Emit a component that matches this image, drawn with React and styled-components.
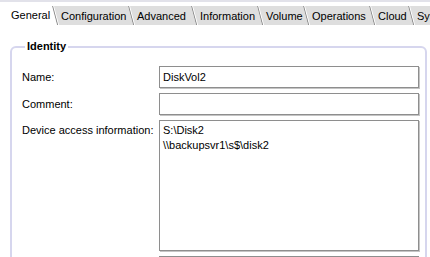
import React from 'react'
import styled, { createGlobalStyle } from 'styled-components'

const Global = createGlobalStyle`
  html, body {
    margin: 0;
    padding: 0;
    background: #fff;
  }
  body {
    font-family: "Liberation Sans", Tahoma, Arial, sans-serif;
    font-size: 11px;
    color: #000;
    overflow: hidden;
  }
`

const Page = styled.div`
  width: 430px;
  height: 257px;
  overflow: hidden;
  background: #fff;
`

const TabBar = styled.div`
  display: flex;
  align-items: flex-end;
  height: 24px;
  padding-left: 2px;
  border-top: 2px solid #e2e2ea;
  overflow: hidden;
  white-space: nowrap;
`

const Tab = styled.div`
  position: relative;
  flex: 0 0 ${p => (p.w ? `${p.w}px` : 'auto')};
  box-sizing: border-box;
  display: flex;
  align-items: center;
  padding-left: ${p => (p.active ? '9px' : '9px')};
  padding-top: ${p => (p.active ? '1px' : '0')};
  height: ${p => (p.active ? '23px' : '19px')};
  margin-bottom: ${p => (p.active ? '0' : '1px')};
  margin-left: ${p => (p.first ? '0' : '-5px')};
  background: ${p => (p.active ? '#fff' : '#dedede')};
  clip-path: ${p => (p.first ? 'none' : 'polygon(0 0, 100% 0, 100% 100%, 5px 100%)')};

  ${p => !p.first && `
    &::before {
      content: '';
      position: absolute;
      left: 0;
      top: 0;
      width: 1px;
      height: 100%;
      background: #8c8c8c;
      box-shadow: 1px 0 0 #fff;
      transform-origin: top left;
      transform: skewX(15deg);
    }
  `}
`

const Group = styled.fieldset`
  margin: 14px 3px 0 10px;
  padding: 13px 6px 20px 10px;
  border: 2px solid #d6d6ee;
  border-radius: 6px;
  min-width: 0;
`

const Legend = styled.legend`
  margin-left: 3px;
  padding: 0 2px;
  font-weight: bold;
  line-height: 13px;
`

const Form = styled.div`
  display: grid;
  grid-template-columns: 137px 1fr;
  row-gap: 5px;
  align-items: center;
`

const Label = styled.label`
  line-height: 15px;
  align-self: ${p => (p.top ? 'start' : 'center')};
  padding-top: ${p => (p.top ? '3px' : '0')};
`

const Field = styled.input`
  box-sizing: border-box;
  height: 22px;
  width: 100%;
  margin: 0;
  padding: 0 3px;
  border: 1px solid #8e8e8e;
  box-shadow: 1px 1px 0 #c4c4c4;
  font: inherit;
  color: #000;
  background: #fff;
  outline: none;
`

const Area = styled.textarea`
  box-sizing: border-box;
  display: block;
  height: ${p => p.h}px;
  width: 100%;
  margin: 0;
  padding: 2px 3px;
  border: 1px solid #8e8e8e;
  box-shadow: 1px 1px 0 #c4c4c4;
  font: inherit;
  line-height: 15px;
  color: #000;
  background: #fff;
  resize: none;
  outline: none;
  overflow: hidden;
`

const tabs = [
  { label: 'General', w: 55 },
  { label: 'Configuration', w: 81 },
  { label: 'Advanced', w: 68 },
  { label: 'Information', w: 71 },
  { label: 'Volume', w: 51 },
  { label: 'Operations', w: 71 },
  { label: 'Cloud', w: 44 },
  { label: 'System', w: 60 },
]

export default function App() {
  return (
    <Page>
      <Global />
      <TabBar>
        {tabs.map((t, i) => (
          <Tab key={t.label} w={t.w} first={i === 0} active={i === 0}>
            {t.label}
          </Tab>
        ))}
      </TabBar>
      <Group>
        <Legend>Identity</Legend>
        <Form>
          <Label>Name:</Label>
          <Field readOnly value="DiskVol2" />
          <Label>Comment:</Label>
          <Field readOnly value="" />
          <Label top>Device access information:</Label>
          <Area h={131} readOnly value={'S:\\Disk2\n\\\\backupsvr1\\s$\\disk2'} />
          <span />
          <Area h={40} readOnly value="" />
        </Form>
      </Group>
    </Page>
  )
}
